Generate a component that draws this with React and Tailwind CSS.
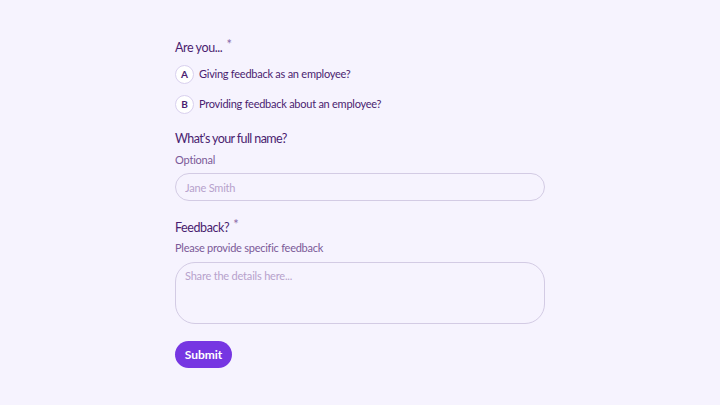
export default function App() {
  const options = [
    ["A", "Giving feedback as an employee?"],
    ["B", "Providing feedback about an employee?"],
  ];

  return (
    <div className="min-h-screen w-full bg-[#f6f3fe] font-['Lato',sans-serif] text-[#4a1d70]">
      <div className="mx-auto w-[370px] pt-[39px]">
        {/* question 1 */}
        <div className="flex items-start text-[12.5px] leading-[18px] tracking-[-0.4px]">
          Are you...
          <span className="ml-[4px] mt-[-4px] text-[13px] text-[#8b6aa8]">*</span>
        </div>
        <div className="mt-[8px] flex flex-col gap-[11px]">
          {options.map(([key, text]) => (
            <div key={key} className="flex items-center gap-[5px]">
              <div className="flex h-[19px] w-[19px] items-center justify-center rounded-full border border-[#d9d0ee] bg-white text-[10px] font-bold">
                {key}
              </div>
              <div className="text-[11px] tracking-[-0.25px]">{text}</div>
            </div>
          ))}
        </div>

        {/* name */}
        <div className="mt-[16px] text-[12.5px] leading-[18px] tracking-[-0.6px]">What's your full name?</div>
        <div className="mt-[4px] text-[11px] leading-[16px] tracking-[-0.2px] text-[#7b5a98]">Optional</div>
        <input
          className="mt-[5px] h-[28px] w-full rounded-full border border-[#d3cbe4] bg-transparent px-[9px] text-[11px] tracking-[-0.2px] outline-none placeholder:text-[#b7a2cc]"
          placeholder="Jane Smith"
        />

        {/* feedback */}
        <div className="mt-[18px] flex items-start text-[12.5px] leading-[18px] tracking-[-0.4px]">
          Feedback?
          <span className="ml-[4px] mt-[-4px] text-[13px] text-[#8b6aa8]">*</span>
        </div>
        <div className="mt-[3px] text-[11px] leading-[16px] tracking-[-0.25px] text-[#7b5a98]">Please provide specific feedback</div>
        <textarea
          className="mt-[6px] block h-[62px] w-full resize-none rounded-[20px] border border-[#d3cbe4] bg-transparent px-[9px] py-[5px] text-[11px] leading-[16px] tracking-[-0.2px] outline-none placeholder:text-[#b7a2cc]"
          placeholder="Share the details here..."
        />

        <button className="mt-[17px] h-[27px] w-[57px] rounded-full bg-[#7636e2] text-[12px] font-bold text-white">
          Submit
        </button>
      </div>
    </div>
  );
}
